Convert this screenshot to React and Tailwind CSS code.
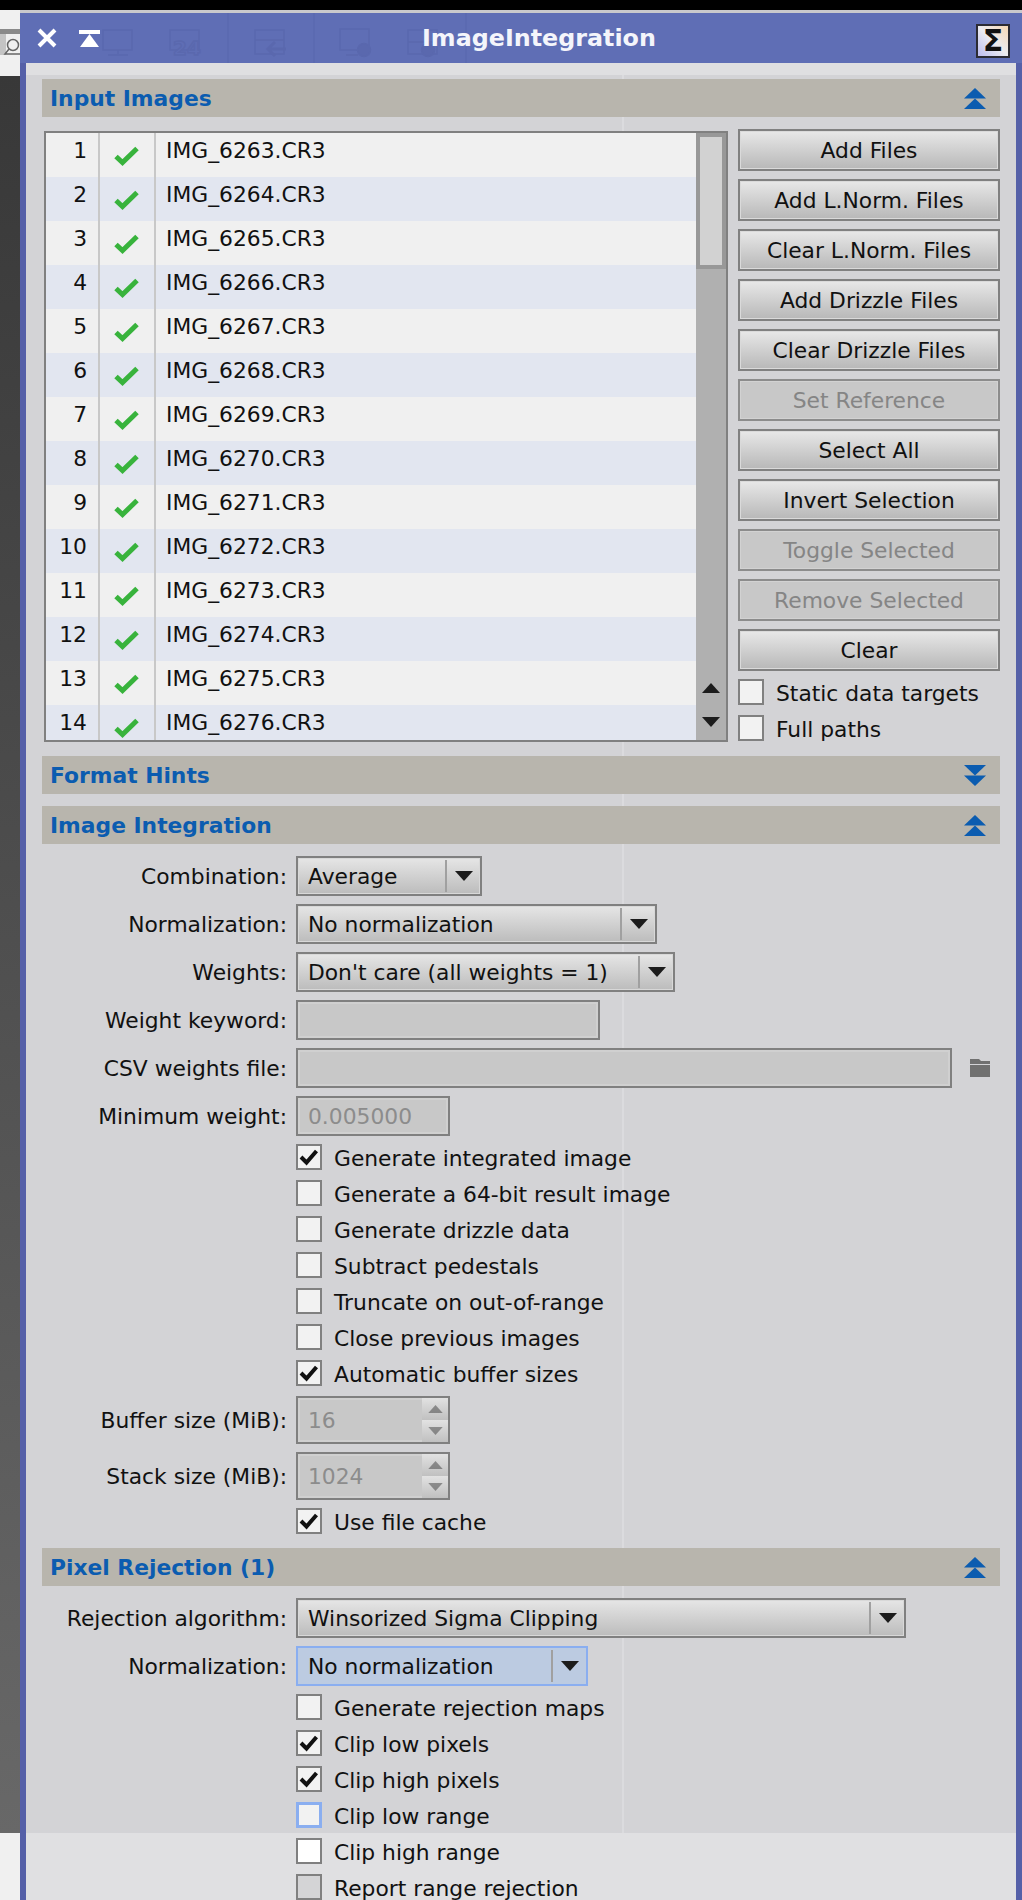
const files = Array.from({ length: 14 }, (_, i) => ({ n: i + 1, name: `IMG_${6263 + i}.CR3` }))

const sideButtons = [
  ['Add Files'],
  ['Add L.Norm. Files'],
  ['Clear L.Norm. Files'],
  ['Add Drizzle Files'],
  ['Clear Drizzle Files'],
  ['Set Reference', true],
  ['Select All'],
  ['Invert Selection'],
  ['Toggle Selected', true],
  ['Remove Selected', true],
  ['Clear'],
]

const Triangle = ({ className }) => (
  <svg width="18" height="10" viewBox="0 0 18 10" className={className}>
    <path d="M0 0H18L9 10Z" fill="#1c1c1c" />
  </svg>
)

const DoubleArrow = ({ down }) => (
  <svg width="22" height="21" viewBox="0 0 22 21" className={down ? 'rotate-180' : ''}>
    <path d="M11 0L22 10.5H0Z" fill="#0b5cb0" />
    <path d="M11 10.5L22 21H0Z" fill="#0b5cb0" />
  </svg>
)

const SectionHeader = ({ title, down }) => (
  <div className="flex h-[38px] items-center justify-between bg-[#b8b5ad] pl-[8px] pr-[14px]">
    <span className="pt-[2px] font-bold text-[#0b5cb0]">{title}</span>
    <DoubleArrow down={down} />
  </div>
)

const GreenCheck = () => (
  <svg width="26" height="20" viewBox="0 0 26 20" className="mt-[13px]">
    <path d="M2 10.5L8.5 16.5L23 2.5" fill="none" stroke="#38b33c" strokeWidth="5" />
  </svg>
)

const Check = ({ label, checked, tone = 'normal', className = '' }) => {
  const box = {
    normal: 'border-[#808080] bg-[#f2f2f2]',
    focus: 'border-[#8aaef0] border-[3px] bg-[#f2f2f2]',
    bright: 'border-[#808080] bg-white',
    off: 'border-[#808080] bg-[#d4d4d6]',
  }[tone]
  return (
    <div className={`flex h-[26px] items-center ${className}`}>
      <div className={`flex h-[26px] w-[26px] shrink-0 items-center justify-center border-2 ${box}`}>
        {checked && (
          <svg width="20" height="18" viewBox="0 0 20 18">
            <path d="M2 9L7.5 14.5L17.5 3" fill="none" stroke="#111" strokeWidth="4" />
          </svg>
        )}
      </div>
      <span className="ml-[12px] whitespace-nowrap pt-[4px] text-[#111]">{label}</span>
    </div>
  )
}

const FormRow = ({ label, children, className = '' }) => (
  <div className={`flex items-center ${className}`}>
    <div className="w-[254px] whitespace-nowrap pr-[9px] pt-[2px] text-right text-[#111]">{label}</div>
    {children}
  </div>
)

const Combo = ({ value, width, focus }) => (
  <div
    className={`flex h-[40px] items-center border-2 ${width} ${
      focus
        ? 'border-[#8aaef0] bg-[#bccbe1]'
        : 'border-[#808080] bg-linear-to-b from-[#e6e6e6] to-[#bcbcbc] shadow-[inset_0_0_0_1px_#d8d8d8]'
    }`}
  >
    <span className="flex-1 whitespace-nowrap pl-[10px] pt-[2px] text-[#111]">{value}</span>
    <div className="h-[32px] w-[2px] bg-[#a0a0a0]" />
    <div className="flex w-[33px] justify-center">
      <Triangle />
    </div>
  </div>
)

const DisabledInput = ({ value, width }) => (
  <div className={`flex h-[40px] items-center border-2 border-[#808080] bg-[#c8c8c8] pl-[10px] pt-[2px] text-[#8c8c8c] shadow-[inset_0_0_0_2px_#d0d0d0] ${width}`}>
    {value}
  </div>
)

const Spinner = ({ value }) => (
  <div className="flex h-[48px] w-[154px] border-2 border-[#808080] bg-[#c8c8c8] shadow-[inset_0_0_0_2px_#d0d0d0]">
    <span className="flex flex-1 items-center pl-[10px] pt-[2px] text-[#8c8c8c]">{value}</span>
    <div className="flex w-[26px] flex-col">
      <div className="flex flex-1 items-center justify-center bg-linear-to-b from-[#e2e2e2] to-[#c0c0c0]">
        <Triangle className="h-[8px] w-[15px] rotate-180 opacity-40" />
      </div>
      <div className="flex flex-1 items-center justify-center bg-linear-to-b from-[#e2e2e2] to-[#c0c0c0]">
        <Triangle className="h-[8px] w-[15px] opacity-40" />
      </div>
    </div>
  </div>
)

const SideButton = ({ label, disabled }) => (
  <div
    className={`flex h-[42px] items-center justify-center border-2 pt-[2px] ${
      disabled
        ? 'border-[#8c8c8c] bg-[#c8c8c8] text-[#858585] shadow-[inset_0_0_0_1px_#d2d2d2]'
        : 'border-[#808080] bg-linear-to-b from-[#e8e8e8] to-[#b8b8b8] text-[#111] shadow-[inset_0_0_0_1px_#dadada]'
    }`}
  >
    {label}
  </div>
)

// the desktop toolbar that shows through the window title
const GhostToolbar = () => (
  <svg
    width="380"
    height="51"
    viewBox="90 13 380 51"
    className="pointer-events-none absolute left-[70px] top-0"
    fill="none"
    stroke="#5a68ae"
    strokeWidth="1.5"
  >
    <path d="M228 13V64M314 13V64M466 13V64" stroke="#5b69b0" />
    <rect x="103" y="30" width="29" height="20" />
    <path d="M118 50V54M108 55H128" />
    <rect x="170" y="30" width="29" height="20" />
    <text x="173" y="55" fontSize="20" fontWeight="bold" fontFamily="DejaVu Sans" fill="#5f6eb5">24</text>
    <rect x="255" y="30" width="29" height="24" />
    <path d="M255 40H284" />
    <path d="M270 49H286M275 42L268 49L275 56" strokeWidth="3" />
    <rect x="340" y="29" width="29" height="21" />
    <path d="M346 55H358" />
    <circle cx="364" cy="50" r="6.5" fill="#5a68ae" />
    <rect x="408" y="30" width="29" height="24" />
    <path d="M408 42H437" />
    <circle cx="428" cy="50" r="6.5" fill="#5a68ae" />
  </svg>
)

export default function App() {
  return (
    <div className="relative h-[1900px] w-[1022px] overflow-hidden bg-black text-[21.8px] leading-[26px] [font-family:'DejaVu_Sans',sans-serif]">
      <div className="h-[10px] bg-black" />
      <div className="flex h-[1890px]">
        {/* what is left of the desktop beside the window */}
        <div className="flex w-[20px] flex-col">
          <div className="h-[66px] bg-[#f0f0f0] pt-[19px]">
            <svg width="20" height="27" viewBox="0 0 20 27">
              <rect width="20" height="5" fill="#8a8a8a" />
              <rect y="5" width="6" height="21" fill="#c4c4c4" />
              <circle cx="13" cy="16" r="5.5" fill="none" stroke="#666" strokeWidth="1.5" />
              <path d="M9 20L5 25H20" fill="none" stroke="#666" strokeWidth="1.5" />
            </svg>
          </div>
          <div className="h-[1757px] bg-linear-to-b from-[#383838] to-[#686868]" />
          <div className="flex-1 bg-[#f0f0f0]" />
        </div>

        <div className="flex flex-1 flex-col border-t-[3px] border-[#c9c9cc]">
          <div className="flex h-[51px] bg-[#5f6eb5]">
            <div className="relative flex flex-1 items-center pl-[17px]">
              <GhostToolbar />
              <svg width="20" height="20" viewBox="0 0 20 20" className="relative mb-[1px]">
                <path d="M2 2L18 18M18 2L2 18" stroke="#fff" strokeWidth="4" />
              </svg>
              <svg width="21" height="17" viewBox="0 0 21 17" className="relative ml-[22px]">
                <rect width="21" height="4" fill="#fff" />
                <path d="M10.5 4L20 17H1Z" fill="#fff" />
              </svg>
              <span className="absolute left-[402px] top-[12px] whitespace-nowrap text-[23.8px] font-bold text-[#f4f5fb]">
                ImageIntegration
              </span>
              <div className="absolute left-[956px] top-[11px] flex h-[34px] w-[34px] items-center justify-center border-2 border-[#2b2b33] bg-linear-to-tr from-[#bdbdf0] via-[#ececf0] to-[#f6d8b4] text-[30px] font-bold text-[#111]">
                Σ
              </div>
            </div>
          </div>

          <div className="relative flex flex-1 border-x-[6px] border-x-[#5560a8] bg-[#d3d3d6]">
            <div className="absolute inset-x-0 bottom-0 h-[67px] bg-[#e0e0e2]" />
            <div className="absolute bottom-[67px] left-[596px] top-[12px] w-[2px] bg-white/20" />
            <div className="absolute inset-x-0 top-0 h-[12px] bg-[#dfdfe1]" />

            <div className="relative flex-1 px-[16px] pt-[16px]">
              <SectionHeader title="Input Images" />

              <div className="mt-[12px] flex">
                <div className="ml-[2px] mt-[2px] flex h-[611px] w-[684px] border-2 border-[#808080]">
                  <div className="flex-1 overflow-hidden">
                    {files.map((file) => (
                      <div key={file.n} className={`flex h-[44px] shrink-0 ${file.n % 2 ? 'bg-[#f0f0f0]' : 'bg-[#e2e6f0]'}`}>
                        <div className="w-[41px] pt-[5px] text-right text-[#111]">{file.n}</div>
                        <div className="ml-[11px] flex w-[58px] justify-center border-x-2 border-[#c8c8c8]">
                          <GreenCheck />
                        </div>
                        <div className="pl-[10px] pt-[5px] text-[#111]">{file.name}</div>
                      </div>
                    ))}
                  </div>
                  <div className="flex w-[30px] flex-col items-center bg-[#b0b0b0]">
                    <div className="h-[136px] w-[30px] border-4 border-[#989898] bg-[#d2d2d2]" />
                    <Triangle className="mt-[414px] rotate-180" />
                    <Triangle className="mt-[24px]" />
                  </div>
                </div>

                <div className="ml-[10px] flex flex-1 flex-col gap-[8px]">
                  {sideButtons.map(([label, disabled]) => (
                    <SideButton key={label} label={label} disabled={disabled} />
                  ))}
                  <Check label="Static data targets" />
                  <Check label="Full paths" className="mt-[2px]" />
                </div>
              </div>

              <div className="mt-[14px]">
                <SectionHeader title="Format Hints" down />
              </div>
              <div className="mt-[12px]">
                <SectionHeader title="Image Integration" />
              </div>

              <div className="mt-[12px] flex flex-col gap-[8px]">
                <FormRow label="Combination:">
                  <Combo value="Average" width="w-[186px]" />
                </FormRow>
                <FormRow label="Normalization:">
                  <Combo value="No normalization" width="w-[361px]" />
                </FormRow>
                <FormRow label="Weights:">
                  <Combo value="Don't care (all weights = 1)" width="w-[379px]" />
                </FormRow>
                <FormRow label="Weight keyword:">
                  <DisabledInput width="w-[304px]" />
                </FormRow>
                <FormRow label="CSV weights file:">
                  <DisabledInput width="w-[656px]" />
                  <svg width="20" height="18" viewBox="0 0 20 18" className="ml-[18px]">
                    <path d="M0 0H9L11 2H20V5H0Z" fill="#707070" />
                    <path d="M0 6H20V18H0Z" fill="#707070" />
                  </svg>
                </FormRow>
                <FormRow label="Minimum weight:">
                  <DisabledInput value="0.005000" width="w-[154px]" />
                </FormRow>
              </div>

              <div className="ml-[254px] mt-[8px] flex flex-col gap-[10px]">
                <Check label="Generate integrated image" checked />
                <Check label="Generate a 64-bit result image" />
                <Check label="Generate drizzle data" />
                <Check label="Subtract pedestals" />
                <Check label="Truncate on out-of-range" />
                <Check label="Close previous images" />
                <Check label="Automatic buffer sizes" checked />
              </div>

              <div className="mt-[10px] flex flex-col gap-[8px]">
                <FormRow label="Buffer size (MiB):">
                  <Spinner value="16" />
                </FormRow>
                <FormRow label="Stack size (MiB):">
                  <Spinner value="1024" />
                </FormRow>
              </div>

              <div className="ml-[254px] mt-[8px]">
                <Check label="Use file cache" checked />
              </div>

              <div className="mt-[14px]">
                <SectionHeader title="Pixel Rejection (1)" />
              </div>

              <div className="mt-[12px] flex flex-col gap-[8px]">
                <FormRow label="Rejection algorithm:">
                  <Combo value="Winsorized Sigma Clipping" width="w-[610px]" />
                </FormRow>
                <FormRow label="Normalization:">
                  <Combo value="No normalization" width="w-[292px]" focus />
                </FormRow>
              </div>

              <div className="ml-[254px] mt-[8px] flex flex-col gap-[10px]">
                <Check label="Generate rejection maps" />
                <Check label="Clip low pixels" checked />
                <Check label="Clip high pixels" checked />
                <Check label="Clip low range" tone="focus" />
                <Check label="Clip high range" tone="bright" />
                <Check label="Report range rejection" tone="off" />
              </div>
            </div>
          </div>
        </div>
      </div>
    </div>
  )
}
